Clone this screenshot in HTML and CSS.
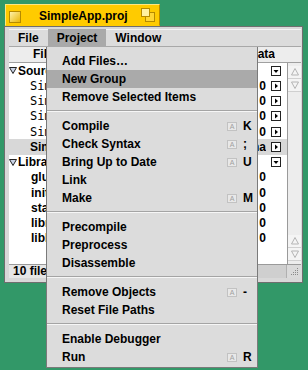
FILE: index.html
```html
<!DOCTYPE html>
<html lang="en">
<head>
    <meta charset="UTF-8">
    <title>SimpleApp.proj</title>
    <link rel="stylesheet" href="styles.css">
</head>
<body>
    <div class="tab">
        <svg class="close-box" width="12" height="12" viewBox="0 0 12 12">
            <defs>
                <linearGradient id="cb" x1="0" y1="0" x2="1" y2="1">
                    <stop offset="0" stop-color="#fff4b0"/>
                    <stop offset="1" stop-color="#e8b400"/>
                </linearGradient>
            </defs>
            <rect x="0.5" y="0.5" width="11" height="11" fill="url(#cb)" stroke="#b58a00"/>
        </svg>
        <span class="title">SimpleApp.proj</span>
        <svg class="zoom-box" width="14" height="14" viewBox="0 0 14 14">
            <rect x="4.5" y="4.5" width="9" height="9" fill="#ffd633" stroke="#b58a00"/>
            <rect x="0.5" y="0.5" width="8" height="8" fill="#fff0a0" stroke="#b58a00"/>
        </svg>
    </div>

    <div class="window">
        <div class="menubar">
            <span class="mb-item">File</span>
            <span class="mb-item active">Project</span>
            <span class="mb-item">Window</span>
        </div>

        <div class="list-head">
            <span class="col-file">File</span>
            <span class="fill"></span>
            <span class="col-data"><span>Data</span></span>
        </div>

        <div class="list-wrap">
            <div class="rows">
                <div class="row group">
                    <svg class="tri" width="8" height="7" viewBox="0 0 8 7"><path d="M0.5 0.5h7l-3.5 6z" fill="#c9d3e6" stroke="#222"/></svg>
                    <span class="name">Sources</span>
                    <span class="fill"></span>
                    <span class="data"></span>
                    <svg class="pop" width="10" height="10" viewBox="0 0 10 10"><rect x="0.5" y="0.5" width="9" height="9" fill="#fff" stroke="#222"/><path d="M2.5 4h5l-2.5 3z"/></svg>
                </div>
                <div class="row file">
                    <span class="name mono">SimpleApp.cpp</span>
                    <span class="fill"></span>
                    <span class="data"><span>0</span></span>
                    <svg class="pop" width="10" height="10" viewBox="0 0 10 10"><rect x="0.5" y="0.5" width="9" height="9" fill="#fff" stroke="#222"/><path d="M4 2.5v5l3-2.5z"/></svg>
                </div>
                <div class="row file">
                    <span class="name mono">SimpleApp.h</span>
                    <span class="fill"></span>
                    <span class="data"><span>0</span></span>
                    <svg class="pop" width="10" height="10" viewBox="0 0 10 10"><rect x="0.5" y="0.5" width="9" height="9" fill="#fff" stroke="#222"/><path d="M4 2.5v5l3-2.5z"/></svg>
                </div>
                <div class="row file">
                    <span class="name mono">SimpleWindow.cpp</span>
                    <span class="fill"></span>
                    <span class="data"><span>0</span></span>
                    <svg class="pop" width="10" height="10" viewBox="0 0 10 10"><rect x="0.5" y="0.5" width="9" height="9" fill="#fff" stroke="#222"/><path d="M4 2.5v5l3-2.5z"/></svg>
                </div>
                <div class="row file">
                    <span class="name mono">SimpleWindow.h</span>
                    <span class="fill"></span>
                    <span class="data"><span>0</span></span>
                    <svg class="pop" width="10" height="10" viewBox="0 0 10 10"><rect x="0.5" y="0.5" width="9" height="9" fill="#fff" stroke="#222"/><path d="M4 2.5v5l3-2.5z"/></svg>
                </div>
                <div class="row file selected">
                    <span class="name">SimpleApp.rsrc</span>
                    <span class="fill"></span>
                    <span class="data"><span>na</span></span>
                    <svg class="pop" width="10" height="10" viewBox="0 0 10 10"><rect x="0.5" y="0.5" width="9" height="9" fill="#fff" stroke="#222"/><path d="M4 2.5v5l3-2.5z"/></svg>
                </div>
                <div class="row group">
                    <svg class="tri" width="8" height="7" viewBox="0 0 8 7"><path d="M0.5 0.5h7l-3.5 6z" fill="#c9d3e6" stroke="#222"/></svg>
                    <span class="name">Libraries</span>
                    <span class="fill"></span>
                    <span class="data"></span>
                    <svg class="pop" width="10" height="10" viewBox="0 0 10 10"><rect x="0.5" y="0.5" width="9" height="9" fill="#fff" stroke="#222"/><path d="M2.5 4h5l-2.5 3z"/></svg>
                </div>
                <div class="row lib">
                    <span class="name">glue-noinit.a</span>
                    <span class="fill"></span>
                    <span class="data"><span>0</span></span>
                    <span class="pop"></span>
                </div>
                <div class="row lib">
                    <span class="name">init_term_dyn.o</span>
                    <span class="fill"></span>
                    <span class="data"><span>0</span></span>
                    <span class="pop"></span>
                </div>
                <div class="row lib">
                    <span class="name">start_dyn.o</span>
                    <span class="fill"></span>
                    <span class="data"><span>0</span></span>
                    <span class="pop"></span>
                </div>
                <div class="row lib">
                    <span class="name">libroot.so</span>
                    <span class="fill"></span>
                    <span class="data"><span>0</span></span>
                    <span class="pop"></span>
                </div>
                <div class="row lib">
                    <span class="name">libbe.so</span>
                    <span class="fill"></span>
                    <span class="data"><span>0</span></span>
                    <span class="pop"></span>
                </div>
            </div>

            <div class="vscroll">
                <span class="arrow"><svg width="12" height="12" viewBox="0 0 12 12"><path d="M6 2.5l3.5 6.5h-7z" fill="none" stroke="#b4b4b4"/></svg></span>
                <span class="arrow"><svg width="12" height="12" viewBox="0 0 12 12"><path d="M6 9.5l3.5-6.5h-7z" fill="none" stroke="#b4b4b4"/></svg></span>
                <span class="track"></span>
                <span class="arrow"><svg width="12" height="12" viewBox="0 0 12 12"><path d="M6 2.5l3.5 6.5h-7z" fill="none" stroke="#b4b4b4"/></svg></span>
                <span class="arrow"><svg width="12" height="12" viewBox="0 0 12 12"><path d="M6 9.5l3.5-6.5h-7z" fill="none" stroke="#b4b4b4"/></svg></span>
            </div>
        </div>

        <div class="bottom-bar">
            <span class="status">10 files</span>
            <span class="hscroll"></span>
            <span class="resize">
                <svg width="14" height="13" viewBox="0 0 14 13">
                    <g fill="#8a8a8a">
                        <rect x="10" y="3" width="1" height="1"/>
                        <rect x="8" y="5" width="1" height="1"/><rect x="10" y="5" width="1" height="1"/>
                        <rect x="6" y="7" width="1" height="1"/><rect x="8" y="7" width="1" height="1"/><rect x="10" y="7" width="1" height="1"/>
                        <rect x="4" y="9" width="1" height="1"/><rect x="6" y="9" width="1" height="1"/><rect x="8" y="9" width="1" height="1"/><rect x="10" y="9" width="1" height="1"/>
                    </g>
                </svg>
            </span>
        </div>
    </div>

    <!-- open Project menu -->
    <div class="menu">
        <div class="item">Add Files…</div>
        <div class="item hi">New Group</div>
        <div class="item">Remove Selected Items</div>
        <div class="sep"></div>
        <div class="item"><span class="label">Compile</span><span class="cmd">A</span><span class="key">K</span></div>
        <div class="item"><span class="label">Check Syntax</span><span class="cmd">A</span><span class="key">;</span></div>
        <div class="item"><span class="label">Bring Up to Date</span><span class="cmd">A</span><span class="key">U</span></div>
        <div class="item">Link</div>
        <div class="item"><span class="label">Make</span><span class="cmd">A</span><span class="key">M</span></div>
        <div class="sep"></div>
        <div class="item">Precompile</div>
        <div class="item">Preprocess</div>
        <div class="item">Disassemble</div>
        <div class="sep"></div>
        <div class="item"><span class="label">Remove Objects</span><span class="cmd">A</span><span class="key">-</span></div>
        <div class="item">Reset File Paths</div>
        <div class="sep"></div>
        <div class="item">Enable Debugger</div>
        <div class="item"><span class="label">Run</span><span class="cmd">A</span><span class="key">R</span></div>
    </div>
</body>
</html>
```

FILE: styles.css
```css
/* desktop */
body {
    margin: 0;
    padding-top: 4px;
    background: #329868;
    font-family: "Liberation Sans", Arial, sans-serif;
    font-size: 12px;
    font-weight: bold;
    color: #000;
}

/* yellow title tab */
.tab {
    box-sizing: border-box;
    width: 155px;
    height: 22px;
    margin-left: 5px;
    display: flex;
    align-items: center;
    padding: 0 4px 0 3px;
    background: #ffcb00;
    border: 1px solid;
    border-color: #ffe680 #b88a00 #ffcb00 #ffe680;
}

.close-box {
    margin-top: 3px;
}

.title {
    margin-left: 18px;
    padding-top: 2px;
}

.zoom-box {
    margin-left: auto;
    margin-top: -1px;
}

/* window frame */
.window {
    box-sizing: border-box;
    width: 299px;
    height: 257px;
    margin-left: 4px;
    padding: 2px 1px 4px 4px;
    background: #d8d8d8;
    border: 1px solid #6e6e6e;
    display: flex;
    flex-direction: column;
}

.menubar {
    height: 18px;
    display: flex;
    background: #dcdcdc;
    box-shadow: inset 0 1px 0 #f4f4f4, inset 0 -1px 0 #a8a8a8;
}

.mb-item {
    padding: 1px 9px 0;
    line-height: 17px;
}

.mb-item.active {
    background: #a9a9a9;
}

/* list (parts under the open menu are clipped at its left edge) */
.list-head {
    height: 16px;
    box-sizing: border-box;
    display: flex;
    background: #ededed;
    border-bottom: 1px solid #a0a0a0;
    line-height: 15px;
}

.fill {
    flex: 1;
}

.col-file {
    width: 37px;
    box-sizing: border-box;
    padding-left: 24px;
    overflow: hidden;
    white-space: nowrap;
}

.col-data {
    width: 17px;
    margin-right: 26px;
    display: flex;
    justify-content: flex-end;
    overflow: hidden;
}

.list-wrap {
    height: 201px;
    display: flex;
}

.rows {
    flex: 1;
    background: #fff;
    overflow: hidden;
}

.row {
    height: 15.25px;
    display: flex;
    align-items: center;
    padding-right: 6px;
    white-space: nowrap;
}

.row.selected {
    background: #d8d8d8;
}

.row .name {
    width: 37px;
    box-sizing: border-box;
    overflow: hidden;
}

.row.group .tri {
    margin-right: 1px;
    flex: none;
}

.row.group .name {
    width: 28px;
}

.row.file .name {
    padding-left: 21px;
}

.row.lib .name {
    padding-left: 22px;
}

.mono {
    font-family: "DejaVu Sans Mono", "Liberation Mono", monospace;
    font-weight: normal;
}

.row .data {
    width: 8px;
    margin-right: 5px;
    display: flex;
    justify-content: flex-end;
    overflow: hidden;
}

.pop {
    width: 10px;
    height: 10px;
    flex: none;
}

.vscroll {
    width: 14px;
    box-sizing: border-box;
    padding: 3px 0;
    border-left: 1px solid #9a9a9a;
    background: #ededed;
    display: flex;
    flex-direction: column;
}

.arrow {
    height: 13px;
    display: flex;
    align-items: center;
    justify-content: center;
    background: #f4f4f4;
    border-bottom: 1px solid #d0d0d0;
    box-sizing: border-box;
}

.track {
    flex: 1;
}

/* bottom bar */
.bottom-bar {
    height: 14px;
    display: flex;
    border-top: 1px solid #9a9a9a;
    box-sizing: border-box;
}

.status {
    width: 37px;
    padding-left: 4px;
    box-sizing: border-box;
    line-height: 12px;
    background: #e6e6e6;
    overflow: hidden;
    white-space: nowrap;
}

.hscroll {
    flex: 1;
    background: #cfcfcf;
}

.resize {
    width: 14px;
    background: #dadada;
    border-left: 1px solid #b0b0b0;
}

/* dropdown menu */
.menu {
    position: absolute;
    left: 46px;
    top: 47px;
    width: 212px;
    box-sizing: border-box;
    padding: 5px 0 1px;
    background: #dcdcdc;
    border: 1px solid #7a7a7a;
    border-top: none;
}

.item {
    height: 18px;
    line-height: 18px;
    padding-left: 15px;
    display: flex;
    align-items: center;
    white-space: nowrap;
}

.item.hi {
    background: #aaaaaa;
}

.item .label {
    flex: 1;
}

.cmd {
    width: 10px;
    height: 9px;
    box-sizing: border-box;
    margin-right: 6px;
    border: 1px solid #c2c2c2;
    background: #e8e8e8;
    color: #a0a0a0;
    font-size: 7px;
    line-height: 7px;
    text-align: center;
    font-weight: normal;
}

.key {
    width: 14px;
}

.sep {
    height: 2px;
    margin: 4px 0 5px;
    border-top: 1px solid #a4a4a4;
    border-bottom: 1px solid #f6f6f6;
    box-sizing: border-box;
}
```
